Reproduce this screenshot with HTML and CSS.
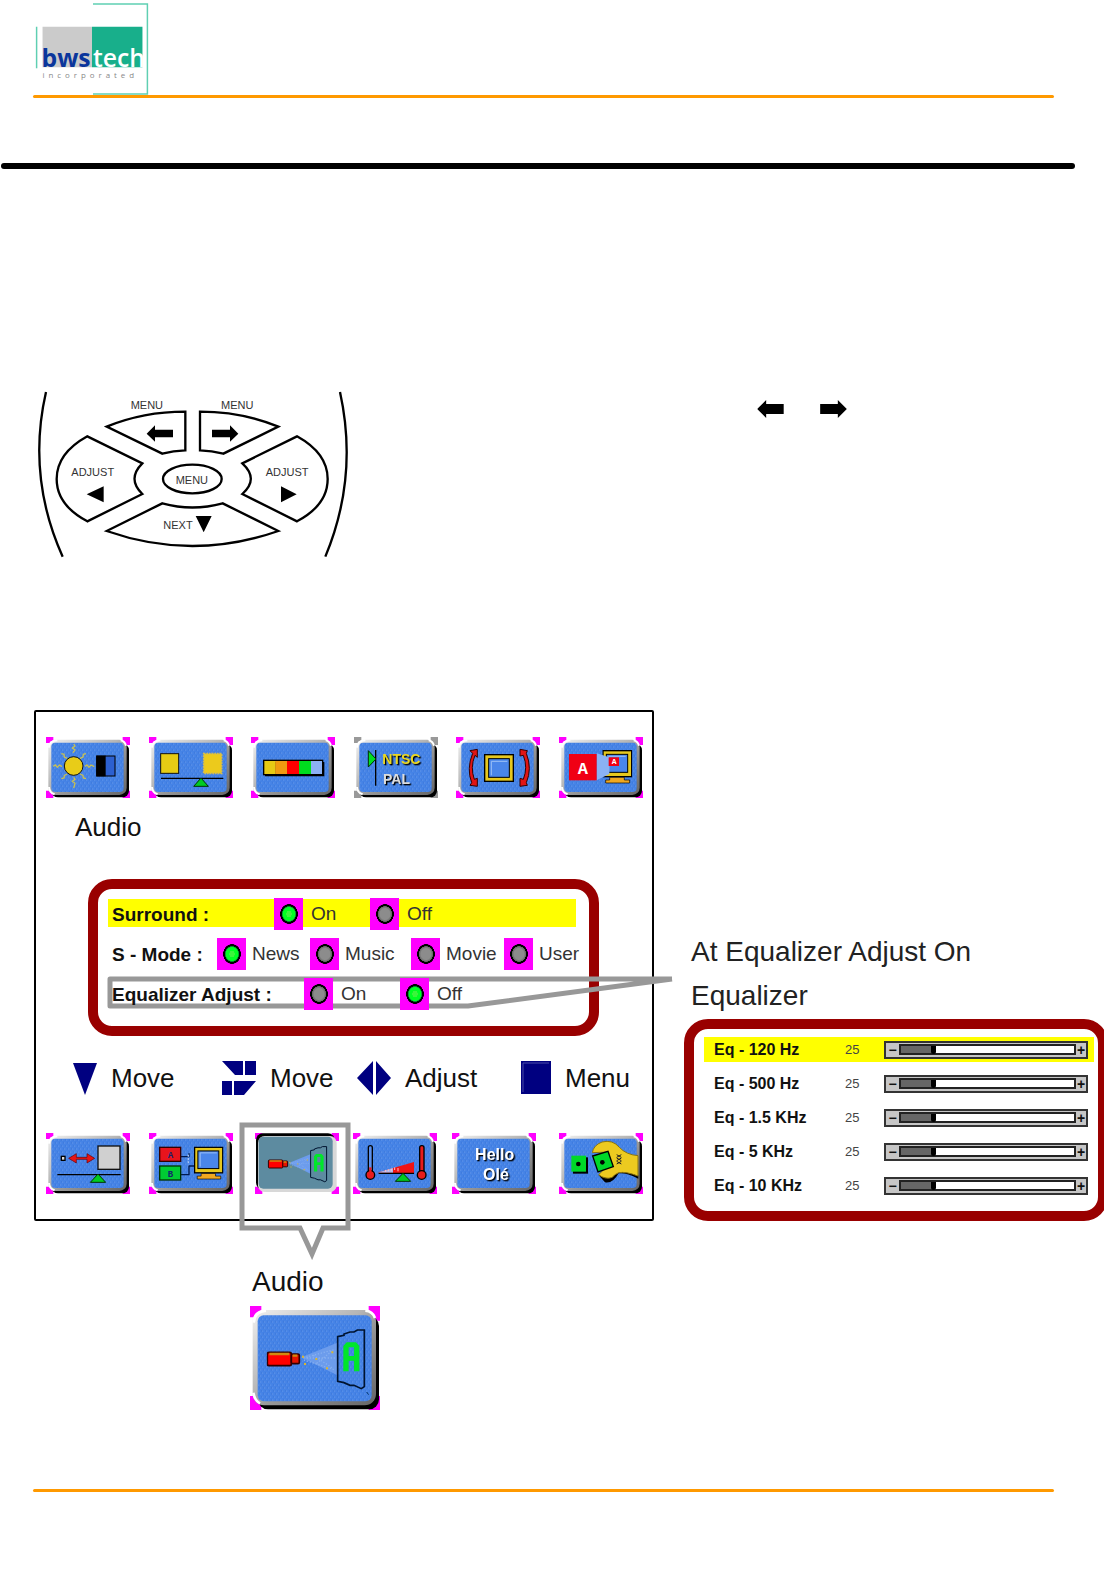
FILE: index.html
```html
<!DOCTYPE html>
<html lang="en">
<head>
<meta charset="utf-8">
<meta name="viewport" content="width=device-width, initial-scale=1">
<title>bwstech - Audio menu</title>
<link rel="stylesheet" href="styles.css">
</head>
<body>
<svg class="defs" aria-hidden="true">
  <defs>
    <linearGradient id="bevel" x1="0" y1="0" x2="1" y2="1">
      <stop offset="0" stop-color="#f0f0f0"/><stop offset=".45" stop-color="#b4b4b4"/><stop offset=".55" stop-color="#999"/><stop offset="1" stop-color="#666"/>
    </linearGradient>
    <pattern id="grain" width="12" height="18" patternUnits="userSpaceOnUse">
      <rect width="12" height="18" fill="#4583e6"/>
      <path d="M2 1v5M8 9v6" stroke="#6296e8" stroke-width="2"/><path d="M5 8v6M11 0v5" stroke="#3a74d6" stroke-width="2"/>
    </pattern>
    <symbol id="corners" viewBox="0 0 252 183">
      <path d="M0 0h22v18H0zM230 0h22v24h-22zM0 161h22v22H0zM230 161h22v22h-22z"/>
    </symbol>
    <symbol id="tile" viewBox="0 0 252 183">
      <rect x="16" y="20" width="233" height="161" rx="20" fill="#000"/>
      <rect x="7" y="8" width="235" height="166" rx="22" fill="url(#bevel)"/>
      <path d="M9 32Q10 11 34 10M9 150Q10 168 26 172M224 10Q236 12 240 26" fill="none" stroke="#fff" stroke-width="6"/>
      <rect x="16" y="17" width="217" height="148" rx="12" fill="url(#grain)"/>
    </symbol>
    <symbol id="tile-pressed" viewBox="0 0 252 183">
      <rect x="3" y="1" width="236" height="168" rx="20" fill="#000"/>
      <rect x="9" y="9" width="236" height="168" rx="20" fill="#d8d8d8"/>
      <rect x="11" y="11" width="222" height="156" rx="14" fill="#5d8ba0"/>
    </symbol>
    <symbol id="monitor" viewBox="0 0 90 106">
      <rect x="2" y="3" width="86" height="78" fill="#e6c81e" stroke="#000" stroke-width="4"/>
      <rect x="12" y="14" width="64" height="54" fill="#4a86ea" stroke="#000" stroke-width="3"/>
      <path d="M19 62V20H70" fill="none" stroke="#9cc0f6" stroke-width="3"/>
      <path d="M22 83H66V91H82V100H10V91H22Z" fill="#f0a820" stroke="#000" stroke-width="2"/>
    </symbol>
    <symbol id="speaker" viewBox="0 0 300 190">
      <rect x="2" y="75" width="72" height="40" rx="5" fill="#f00" stroke="#300" stroke-width="5"/>
      <rect x="74" y="80" width="24" height="29" rx="4" fill="#e41400" stroke="#300" stroke-width="5"/>
      <path d="M8 80H68M78 85h14" stroke="#d08a10" stroke-width="7"/>
      <path d="M104 90L212 46V144Z" fill="#6c9cec"/>
      <path d="M110 92l96-26M112 98l94 30M120 92h86M140 84l60 40M150 108l50-40" stroke="#86aff0" stroke-width="4" stroke-dasharray="4 5"/>
      <path d="M106 85h6v6h-6zM112 107h6v6h-6zM146 92h6v6h-6zM194 72h6v6h-6zM178 120h6v6h-6z" fill="#d9b630"/>
      <path d="M213 28L232 24V20L250 14H262L272 8H293V178L284 184L262 174H250L232 166L213 162Z" fill="none" stroke="#001430" stroke-width="5"/>
      <path d="M230 132V56L240 45H268L278 56V132H262V100H246V132ZM246 60V86H262V60Z" fill="#00e62a" fill-rule="evenodd"/>
    </symbol>
    <symbol id="arrow-left" viewBox="0 0 80 54">
      <path d="M0 27L27 0V12H80V42H27V54Z"/>
    </symbol>
  </defs>
</svg>

<header class="masthead">
  <svg class="logo" viewBox="0 0 115 93" role="img" aria-label="bwstech incorporated">
    <path d="M58 1H113V92H58" fill="none" stroke="#5fcfb2" stroke-width="1.5"/>
    <path d="M1 24V66" stroke="#5fcfb2" stroke-width="1.5"/>
    <path d="M7 24H57V65H7Z" fill="#cbcbcb"/><path d="M57 24H108V65H57Z" fill="#18af8b"/>
    <text class="logo-bws" x="6" y="65">bws</text><text class="logo-tech" x="58" y="65">tech</text>
    <text class="logo-inc" x="7" y="76">incorporated</text>
  </svg>
</header>
<hr class="rule-black">

<section class="remote-row">
  <svg class="remote" viewBox="24 30 930 504" role="img" aria-label="Remote control keys">
    <g fill="none" stroke="#000" stroke-width="7">
      <path d="M48 36Q-10 290 98 530M930 36Q986 290 886 530"/>
      <path d="M230 140Q340 95 466 95V211Q430 212 397 221Z"/>
      <path d="M745 140Q635 95 510 95V211Q545 212 580 221Z"/>
      <path d="M172 169L337 250Q290 297 337 342L172 424Q80 375 80 297Q80 220 172 169Z"/>
      <path d="M801 169L637 250Q688 297 637 342L801 424Q893 375 893 297Q893 220 801 169Z"/>
      <path d="M397 370Q487 395 578 370L745 453Q487 543 230 453Z"/>
      <ellipse cx="487" cy="297" rx="88" ry="43"/>
    </g>
    <path d="M350 161L375 136V149H429V172H375V185ZM625 161L600 136V149H546V172H600V185ZM170 343L221 319V367ZM800 343L753 319V367ZM497 408H545L521 457Z"/>
    <g class="key-text">
      <text x="302" y="86">MENU</text><text x="573" y="86">MENU</text>
      <text x="124" y="287">ADJUST</text><text x="707" y="287">ADJUST</text>
      <text x="437" y="311">MENU</text><text x="400" y="446">NEXT</text>
    </g>
  </svg>
  <div class="arrows">
    <svg viewBox="0 0 80 54"><use href="#arrow-left"/></svg>
    <svg viewBox="0 0 80 54"><path d="M80 27L53 0V12H0V42H53V54Z"/></svg>
  </div>
</section>

<main class="stage">
  <div class="left">
    <section class="osd">
      <div class="toolbar">
        <button class="tool" type="button" aria-label="Brightness"><svg viewBox="0 0 252 183"><use href="#corners" class="key"/><use href="#tile"/><g transform="translate(-48 -115)">
          <path d="M131 136l4 6-8 6 8 6-6 8M131 236l4 6-8 6 8 6-4 14M70 203l6-4 6 7 6-7 8 5M165 203l6-4 6 7 6-7 10 5M94 165l8 2 1 8 9 4M168 165l-8 2-1 8-9 4M94 240l8-2 1-8 9-4M168 240l-8-2-1-8-9-4" fill="none" stroke="#c8c054" stroke-width="4"/>
          <circle cx="131" cy="202" r="28" fill="#e8cc18" stroke="#111" stroke-width="3"/>
          <rect x="200" y="172" width="55" height="60" fill="#2c60d0" stroke="#000" stroke-width="3"/><path d="M199 171h28v62h-28z"/></g></svg></button>
        <button class="tool" type="button" aria-label="Sharpness"><svg viewBox="0 0 252 183"><use href="#corners" class="key"/><use href="#tile"/><g transform="translate(-353 -111)">
          <rect x="388" y="161" width="54" height="59" fill="#e6cc14" stroke="#111" stroke-width="3"/>
          <rect x="517" y="161" width="54" height="59" fill="#ecca1c" stroke="#d4bc50" stroke-width="5" stroke-dasharray="5 3"/>
          <path d="M389 235H576" stroke="#000" stroke-width="4"/><path d="M509 234L531 259H487Z" fill="#0c2" stroke="#030" stroke-width="3"/></g></svg></button>
        <button class="tool" type="button" aria-label="Color"><svg viewBox="0 0 252 183"><use href="#corners" class="key"/><use href="#tile"/><g transform="translate(-662 -111)">
          <path d="M704 186h178v43H704z"/><path d="M700 181h36v43h-36z" fill="#e6ca14"/><path d="M735 181h35v43h-35z" fill="#f09a10"/><path d="M770 181h36v43h-36z" fill="#f00"/><path d="M806 181h36v43h-36z" fill="#00dc1e"/><path d="M842 181h35v43h-35z" fill="#8cb0f4"/><rect x="700" y="181" width="177" height="43" fill="none" stroke="#000" stroke-width="4"/></g></svg></button>
        <button class="tool" type="button" aria-label="Video system"><svg viewBox="0 0 252 183"><use href="#corners" class="key-gray"/><use href="#tile"/><g transform="translate(-39 -111)">
          <path d="M104 150V257" stroke="#000" stroke-width="4"/><path d="M82 152L105 177L82 201Z" fill="#0d2" stroke="#030" stroke-width="3"/>
          <g class="ntsc"><text x="124" y="193" fill="#ecd820">NTSC</text><text x="126" y="253" fill="#dcdcdc">PAL</text></g></g></svg></button>
        <button class="tool" type="button" aria-label="Geometry"><svg viewBox="0 0 252 183"><use href="#corners" class="key"/><use href="#tile"/><g transform="translate(-348 -111)">
          <rect x="434" y="164" width="86" height="80" fill="#e6c81e" stroke="#000" stroke-width="4"/><rect x="446" y="176" width="62" height="56" fill="#4a86ea" stroke="#000" stroke-width="3"/><path d="M454 226V184H502" fill="none" stroke="#9cc0f6" stroke-width="3"/>
          <path d="M390 152l22-4v24l-7-6q-15 36-2 72l9-3v24l-22-3 5-8q-16-42 3-88zM562 152l-22-4v20l10-2q14 36 0 72l-10-3v24l22-3-3-8q18-42 0-88z" fill="#e01414" stroke="#300" stroke-width="3"/></g></svg></button>
        <button class="tool" type="button" aria-label="Picture in picture"><svg viewBox="0 0 252 183"><use href="#corners" class="key"/><use href="#tile"/><g transform="translate(-657 -111)">
          <use href="#monitor" x="787" y="149" width="90" height="106"/><path d="M770 160L808 172V222L770 241Z" fill="#8ab2f4"/><path d="M687 162h83v79h-83z" fill="#f00014"/><path d="M806 172h31v26h-31z" fill="#f00014"/>
          <text class="glyph" x="713" y="221" font-size="51">A</text><text class="glyph" x="815" y="193" font-size="24">A</text></g></svg></button>
      </div>

      <h1 class="osd-title">Audio</h1>

      <form class="panel audio-panel">
        <fieldset class="row surround" aria-labelledby="l1">
          <span class="row-label" id="l1">Surround :</span>
          <label class="option"><input type="radio" name="surround" checked>On</label>
          <label class="option"><input type="radio" name="surround">Off</label>
        </fieldset>
        <fieldset class="row smode" aria-labelledby="l2">
          <span class="row-label" id="l2">S - Mode :</span>
          <label class="option"><input type="radio" name="smode" checked>News</label>
          <label class="option"><input type="radio" name="smode">Music</label>
          <label class="option"><input type="radio" name="smode">Movie</label>
          <label class="option"><input type="radio" name="smode">User</label>
        </fieldset>
        <fieldset class="row equalizer" aria-labelledby="l3">
          <svg class="pointer" viewBox="0 0 570 36" aria-hidden="true"><path d="M565 3H3V30H361L565 3" fill="none" stroke="#989898" stroke-width="5" stroke-linejoin="round"/></svg>
          <span class="row-label" id="l3">Equalizer Adjust :</span>
          <label class="option"><input type="radio" name="eq">On</label>
          <label class="option"><input type="radio" name="eq" checked>Off</label>
        </fieldset>
      </form>

      <ul class="hints">
        <li><svg width="24" height="34" viewBox="0 0 24 34"><path d="M0 2H24L12 34Z"/></svg>Move</li>
        <li><svg width="34" height="34" viewBox="0 0 34 34"><path d="M0 0H21V14H13ZM23 0H34V14H23ZM0 20H10V34H0ZM12 20H34L22 34H12Z"/></svg>Move</li>
        <li><svg width="34" height="34" viewBox="0 0 34 34"><path d="M0 17L16 0V34ZM34 17L19 0V34Z"/></svg>Adjust</li>
        <li><svg width="30" height="34" viewBox="0 0 30 34"><path d="M0 0H30V33H0Z"/><path d="M2 31V2H28" fill="none" stroke="#4a4aa8" stroke-width="1"/></svg>Menu</li>
      </ul>

      <div class="toolbar toolbar-bottom">
        <button class="tool" type="button" aria-label="Size"><svg viewBox="0 0 252 183"><use href="#corners" class="key"/><use href="#tile"/><g transform="translate(-44 -249)">
          <rect x="90" y="319" width="11" height="12" fill="#ddd" stroke="#000" stroke-width="4"/><path d="M112 325L135 311V322H167V311L190 325L167 339V328H135V339Z" fill="#e81414" stroke="#600" stroke-width="2"/>
          <rect x="200" y="288" width="66" height="70" fill="#d0d0d0" stroke="#111" stroke-width="4"/><path d="M78 374H268" stroke="#000" stroke-width="4"/><path d="M200 372L223 397H177Z" fill="#0c2" stroke="#030" stroke-width="3"/></g></svg></button>
        <button class="tool" type="button" aria-label="Input source"><svg viewBox="0 0 252 183"><use href="#corners" class="key"/><use href="#tile"/><g transform="translate(-353 -249)">
          <path d="M448 320H473V310M448 374H473V348H488" fill="none" stroke="#001a50" stroke-width="4"/><path d="M471 314V346" stroke="#a8c4f4" stroke-width="4" stroke-dasharray="6 4"/>
          <rect x="385" y="292" width="63" height="42" fill="#e8141c" stroke="#300" stroke-width="4"/><rect x="385" y="348" width="63" height="42" fill="#0c3" stroke="#030" stroke-width="4"/>
          <text class="glyph-blue" x="409" y="324">A</text><text class="glyph-blue" x="409" y="380">B</text><use href="#monitor" x="487" y="289" width="90" height="104"/></g></svg></button>
        <div class="current">
          <svg class="bubble" viewBox="0 0 112 138" aria-hidden="true"><path d="M3 3H109V106H84L73 132L61 106H3Z" fill="none" stroke="#989898" stroke-width="5"/></svg>
          <button class="tool" type="button" aria-label="Audio" aria-pressed="true"><svg viewBox="0 0 252 183"><use href="#corners" class="key"/><use href="#tile-pressed"/><use href="#speaker" x="34" y="36" width="190" height="114"/></svg></button>
        </div>
        <button class="tool" type="button" aria-label="Color temperature"><svg viewBox="0 0 252 183"><use href="#corners" class="key"/><use href="#tile"/><g transform="translate(-40 -249)">
          <path d="M117 367L223 336V370H117Z" fill="#f01414"/><path d="M117 367L160 354V368H117Z" fill="#a8b8f0"/><path d="M138 366v-6M146 364v-6M155 364v-8M165 360v-8M175 364v-10" stroke="#ffc0c8" stroke-width="3"/><path d="M117 370H223" stroke="#000" stroke-width="4"/><path d="M190 370L213 394H167Z" fill="#0c2" stroke="#030" stroke-width="3"/>
          <g stroke="#000" stroke-width="4"><rect x="86" y="287" width="12" height="84" rx="6" fill="#5c90ec"/><rect x="240" y="287" width="13" height="84" rx="6" fill="#e81c1c"/><circle cx="92" cy="375" r="13" fill="#e81c1c"/><circle cx="246" cy="375" r="13" fill="#e81c1c"/></g><path d="M92 352V376" stroke="#e81c1c" stroke-width="7"/></g></svg></button>
        <button class="tool" type="button" aria-label="Language"><svg viewBox="0 0 252 183"><use href="#corners" class="key"/><use href="#tile"/><g class="hello"><text x="128" y="80">Hello</text><text x="132" y="140">Olé</text></g></svg></button>
        <button class="tool" type="button" aria-label="Setup"><svg viewBox="0 0 252 183"><use href="#corners" class="key"/><use href="#tile"/><g transform="translate(-657 -249)">
          <path d="M699 322h45v49h-45z"/><path d="M694 317h44v48h-44z" fill="#00d828"/><circle cx="715" cy="342" r="7"/>
          <path d="M776 376L795 397Q818 402 836 370Q860 368 895 386V376L840 350Z"/><path d="M757 308Q760 286 786 276Q818 268 838 292Q858 314 894 317V378Q858 364 836 368Q822 374 817 382Q796 390 776 374L790 360L808 340L806 306Z" fill="#ecca20" stroke="#8a7410" stroke-width="3"/>
          <path d="M758 318L804 304L820 350L774 366Z" fill="#00d828" stroke="#000" stroke-width="4"/><circle cx="787" cy="337" r="7"/><path d="M830 314l14 8M844 314l-14 8M830 324l14 8M844 324l-14 8M830 334l14 8M844 334l-14 8" stroke="#222" stroke-width="3"/></g></svg></button>
      </div>
    </section>

    <figure class="detail">
      <figcaption>Audio</figcaption>
      <svg viewBox="0 0 390 312" role="img" aria-label="Audio icon">
        <path d="M0 0h34v34H0zM356 0h34v44h-34zM0 270h34v42H0zM356 270h34v42h-34z" fill="#f0f"/>
        <rect x="24" y="30" width="363" height="280" rx="30"/><rect x="8" y="12" width="370" height="286" rx="34" fill="url(#bevel)"/>
        <path d="M11 50Q13 16 48 14M10 260Q14 284 30 292M346 14Q368 16 375 36" fill="none" stroke="#fff" stroke-width="8"/>
        <rect x="23" y="28" width="342" height="258" rx="18" fill="url(#grain)"/>
        <use href="#speaker" x="50" y="64" width="300" height="190"/><path d="M350 258l6 8" stroke="#036" stroke-width="3"/>
      </svg>
    </figure>
  </div>

  <section class="right">
    <h2>At Equalizer Adjust On</h2>
    <h2>Equalizer</h2>
    <form class="panel eq-panel">
      <div class="eq-row active"><label for="e1">Eq - 120 Hz</label><output for="e1">25</output><span class="slider"><i>−</i><input id="e1" type="range" min="0" max="140" value="25"><i>+</i></span></div>
      <div class="eq-row"><label for="e2">Eq - 500 Hz</label><output for="e2">25</output><span class="slider"><i>−</i><input id="e2" type="range" min="0" max="140" value="25"><i>+</i></span></div>
      <div class="eq-row"><label for="e3">Eq - 1.5 KHz</label><output for="e3">25</output><span class="slider"><i>−</i><input id="e3" type="range" min="0" max="140" value="25"><i>+</i></span></div>
      <div class="eq-row"><label for="e4">Eq - 5 KHz</label><output for="e4">25</output><span class="slider"><i>−</i><input id="e4" type="range" min="0" max="140" value="25"><i>+</i></span></div>
      <div class="eq-row"><label for="e5">Eq - 10 KHz</label><output for="e5">25</output><span class="slider"><i>−</i><input id="e5" type="range" min="0" max="140" value="25"><i>+</i></span></div>
    </form>
  </section>
</main>

<footer class="foot"></footer>
</body>
</html>
```
FILE: styles.css
```css
* { box-sizing: border-box; }

body {
  margin: 0;
  background: #fff;
  color: #111;
  font-family: "Liberation Sans", Arial, sans-serif;
  overflow-x: hidden;
}

svg { display: block; }
.defs { position: absolute; width: 0; height: 0; }

/* Header */
.masthead {
  margin: 0 50px 0 33px;
  padding: 3px 0 0 2px;
}
.masthead::after,
.foot::after {
  content: "";
  display: block;
  height: 3px;
  border-radius: 2px;
  background: #f90;
}
.logo { width: 115px; height: 92px; }
.masthead::after { margin-left: -2px; }
.logo text { font-family: "Open Sans", "Noto Sans", sans-serif; }
.logo-bws { font-size: 25px; font-weight: 700; fill: #0a369c; }
.logo-tech { font-size: 25px; font-weight: 600; fill: #fff; }
.logo .logo-inc { font-size: 8px; letter-spacing: 4px; fill: #888; }
.rule-black {
  height: 6px;
  margin: 65px 29px 0 1px;
  border: 0;
  border-radius: 3px;
  background: #000;
}

/* Remote control */
.remote-row {
  display: grid;
  grid-template-columns: minmax(310px, 719fr) 347fr;
  padding: 221px 0 0 38px;
}
.remote { width: 310px; height: 168px; overflow: visible; }
.key-text { font-size: 33px; fill: #333; }
.arrows { display: flex; gap: 36px; padding-top: 10px; }
.arrows svg { width: 27px; height: 18px; }

/* Main area */
.stage {
  display: grid;
  grid-template-columns: minmax(0, 620fr) minmax(0, 424fr);
  gap: 30px;
  margin: 152px -4px 0 34px;
}
.osd { border: 2px solid #000; padding: 25px 0; border-radius: 2px; }
.toolbar { display: flex; justify-content: space-between; padding: 0 9px 0 10px; }
.toolbar-bottom {
  display: grid;
  grid-template-columns: 103fr 106fr 99fr 99fr 107fr 84px;
  margin-top: 38px;
}
.tool {
  display: block;
  width: 84px;
  height: 61px;
  padding: 0;
  border: 0;
  background: none;
  position: relative;
}
.tool svg { width: 84px; height: 61px; }
.key { fill: #f0f; }
.key-gray { fill: #999; }
.ntsc, .hello { filter: drop-shadow(4px 4px 0 #000); }
.ntsc { font: 700 42px "Liberation Sans", sans-serif; }
.glyph { font-family: "Liberation Mono", monospace; font-weight: 700; fill: #fff; }
.glyph-blue { font: 700 27px "Liberation Mono", monospace; fill: #15246c; }
.hello { font: 700 48px "Liberation Sans", sans-serif; text-anchor: middle; fill: #fff; }
.current { position: relative; }
.bubble { position: absolute; left: -16px; top: -11px; width: 112px; height: 138px; }

.osd-title {
  margin: 11px 0 0 39px;
  font-size: 26px;
  font-weight: 400;
  line-height: 36px;
}

.panel { border: 10px solid #990000; border-radius: 24px; }
.audio-panel {
  display: flex;
  flex-direction: column;
  gap: 12px;
  margin: 34px 53px 0 52px;
  padding: 10px 13px 19px 10px;
}
.row {
  display: grid;
  align-items: center;
  min-width: 0;
  height: 28px;
  margin: 0;
  padding: 0 0 0 4px;
  border: 0;
  font-size: 19px;
  line-height: 28px;
  position: relative;
}
.surround { grid-template-columns: 162px 96px auto; background: #ff0; }
.smode { grid-template-columns: 105px 93px 101px 93px auto; }
.equalizer { grid-template-columns: 192px 96px auto; }
.row-label { font-weight: 700; padding-top: 2px; white-space: nowrap; position: relative; }
.option { display: flex; align-items: center; gap: 8px; color: #333; position: relative; white-space: nowrap; }
.smode .option { gap: 6px; }
.option input {
  appearance: none;
  flex: none;
  width: 29px;
  height: 32px;
  margin: -2px 0;
  background: radial-gradient(ellipse 9px 10px at 15px 16px, #8c8c8c 0 55%, #666 76%, #000 80% 96%, #f0f 100%);
}
.option input:checked {
  background: radial-gradient(ellipse 9px 10px at 15px 16px, #3cf43c 0 30%, #0f2 32% 66%, #063 78%, #000 80% 96%, #f0f 100%);
}
.pointer { position: absolute; left: -1px; top: -3px; width: 570px; height: 36px; }

.hints {
  display: grid;
  grid-template-columns: 149fr 135fr 164fr 131fr;
  margin: 25px 0 0;
  padding: 0 0 0 37px;
  list-style: none;
  font-size: 26px;
  line-height: 34px;
}
.hints li { display: flex; gap: 14px; }
.hints svg { fill: #000080; flex: none; }

.detail { margin: 43px 0 0 216px; }
.detail figcaption { padding-left: 2px; font-size: 28px; line-height: 36px; }
.detail svg { width: 130px; height: 104px; margin-top: 6px; }

/* Equalizer */
.right { padding-top: 220px; }
.right h2 {
  margin: 0 0 0 7px;
  font-size: 28px;
  font-weight: 400;
  line-height: 44px;
  color: #222;
  white-space: nowrap;
}
.eq-panel {
  display: flex;
  flex-direction: column;
  gap: 9px;
  margin-top: 1px;
  padding: 8px 4px 13px 10px;
}
.eq-row {
  display: grid;
  grid-template-columns: minmax(0, 131fr) 39px minmax(0, 204fr);
  align-items: center;
  height: 25px;
  padding: 0 6px 0 10px;
}
.eq-row.active { background: #ff0; }
.eq-row label { font-size: 16px; font-weight: 700; white-space: nowrap; }
.eq-row output { font-size: 13px; color: #444; }
.slider {
  display: grid;
  grid-template-columns: 13px 1fr 10px;
  align-items: center;
  height: 18px;
  border: 2px solid #333;
  background: #c6c6c6;
}
.slider i { font-style: normal; font-weight: 700; font-size: 14px; line-height: 14px; text-align: center; }
.slider input {
  appearance: none;
  width: 100%;
  height: 11px;
  margin: 0;
  border: 2px solid #222;
  background: linear-gradient(90deg, #666 18%, #fff 18%);
}
.slider input::-webkit-slider-thumb {
  appearance: none;
  width: 5px;
  height: 8px;
  background: #000;
  border-radius: 0 0 4px 4px;
}

.foot { margin: 79px 50px 0 33px; padding-bottom: 81px; }
```
